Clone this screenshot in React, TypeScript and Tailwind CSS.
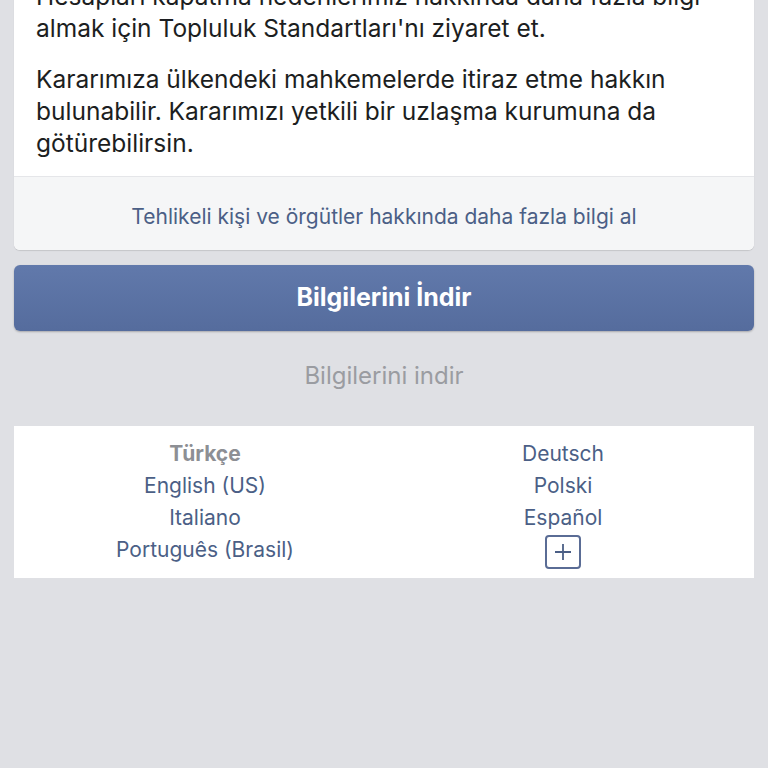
import * as React from "react";

const languages: { left: string; right?: string; current?: boolean }[] = [
  { left: "Türkçe", right: "Deutsch", current: true },
  { left: "English (US)", right: "Polski" },
  { left: "Italiano", right: "Español" },
  { left: "Português (Brasil)" },
];

export default function App() {
  return (
    <div
      className="h-[768px] w-[768px] overflow-hidden bg-[#dfe0e4] px-[14px]"
      style={{ fontFamily: "Inter, 'Noto Sans', sans-serif" }}
    >
      {/* card with explanation text, top cut off */}
      <div className="-mt-[20px] overflow-hidden rounded-b-[6px] bg-white shadow-[0_1px_1px_rgba(0,0,0,0.12)]">
        <div className="px-[22px] pb-[17px] text-[24.5px] leading-[32px] text-[#1c1e21]">
          <p className="whitespace-nowrap">
            Hesapları kapatma nedenlerimiz hakkında daha fazla bilgi
            <br />
            almak için Topluluk Standartları'nı ziyaret et.
          </p>
          <p className="mt-[19px] whitespace-nowrap">
            Kararımıza ülkendeki mahkemelerde itiraz etme hakkın
            <br />
            bulunabilir. Kararımızı yetkili bir uzlaşma kurumuna da
            <br />
            götürebilirsin.
          </p>
        </div>
        <div className="flex h-[74px] items-center justify-center border-t border-[#e5e6e9] bg-[#f5f6f7] pt-[6px] text-[21px] text-[#4b5f86]">
          Tehlikeli kişi ve örgütler hakkında daha fazla bilgi al
        </div>
      </div>

      <button
        type="button"
        className="mt-[15px] flex h-[66px] w-full items-center justify-center rounded-[6px] bg-gradient-to-b from-[#6179ab] to-[#556c9d] text-[25px] font-bold text-white shadow-[0_1px_2px_rgba(0,0,0,0.25)]"
      >
        Bilgilerini İndir
      </button>

      <div className="flex h-[92px] items-center justify-center pb-[2px] text-[24px] text-[#9a9ca1]">
        Bilgilerini indir
      </div>

      <div className="mt-[3px] grid grid-cols-2 bg-white pb-[10px] pt-[12px] text-[21px] leading-[32px] text-[#4b5f86]">
        {languages.map((row, i) => (
          <React.Fragment key={i}>
            <div className="pl-[12px] text-center">
              {row.current ? (
                <span className="font-bold text-[#8d8f94]">{row.left}</span>
              ) : (
                row.left
              )}
            </div>
            <div className="pr-[12px] text-center">
              {row.right ? (
                row.right
              ) : (
                <span className="inline-flex h-[34px] w-[36px] translate-y-[1px] items-center justify-center rounded-[4px] border-2 border-[#5a6c95] align-middle">
                  <svg width="18" height="18" viewBox="0 0 18 18" fill="none">
                    <path d="M9 1v16M1 9h16" stroke="#4b5f86" strokeWidth="1.8" />
                  </svg>
                </span>
              )}
            </div>
          </React.Fragment>
        ))}
      </div>
    </div>
  );
}
